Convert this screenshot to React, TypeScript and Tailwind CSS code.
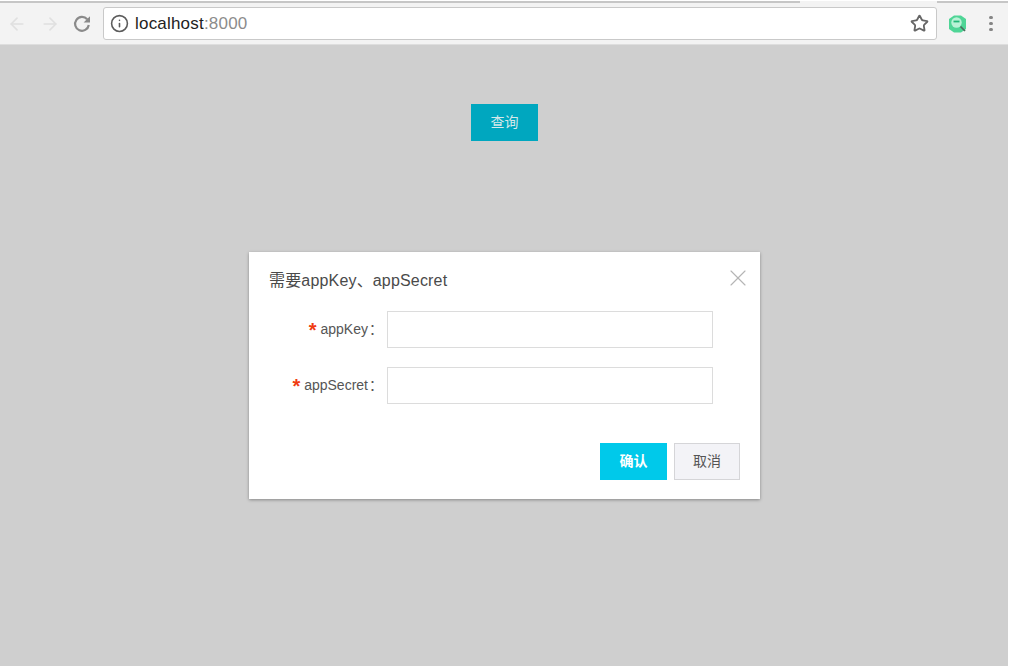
import React from 'react';
import { ArrowLeft, ArrowRight, Info, Star, X } from 'lucide-react';

const fontStack = 'font-["Liberation_Sans","Noto_Sans_CJK_SC",sans-serif]';

const ReloadIcon = () => (
  <svg width="18" height="18" viewBox="0 0 18 18" fill="none" className="ml-[13px]">
    <path d="M14.2 4.3 A6.9 6.9 0 1 0 15.8 10" stroke="#8a8a8a" strokeWidth="2.2" />
    <path d="M17 1.2 V7.6 H10.6 Z" fill="#8a8a8a" />
  </svg>
);

const ExtensionIcon = () => (
  <svg width="19" height="18" viewBox="0 0 19 18" className="ml-[11px]">
    <path d="M6 0.5 H13 L18 4 V14 L13 17.5 H6 L1 14 V4 Z" fill="#4fd596" />
    <circle cx="8.5" cy="7.5" r="5.2" fill="#b9f2d6" />
    <path d="M5.5 6.5 h6" stroke="#22b777" strokeWidth="1.8" />
    <path d="M12.5 11.5 L17 16" stroke="#4d6b5e" strokeWidth="1.7" />
  </svg>
);

const Toolbar = () => (
  <div className="flex h-[45px] shrink-0 flex-col border-b border-[#dedede] bg-[#f3f3f3]">
    <div className="flex h-[3px] justify-between border-t border-white">
      <div className="w-[800px] bg-[#c6c6c6]"></div>
      <div className="w-[71px] bg-[#c6c6c6]"></div>
    </div>
    <div className="flex flex-1 items-center pl-[7px]">
      <ArrowLeft size={20} strokeWidth={2} className="text-[#e0e0e0]" />
      <ArrowRight size={20} strokeWidth={2} className="ml-[13px] text-[#e0e0e0]" />
      <ReloadIcon />
      <div className="ml-[12px] flex h-[33px] w-[834px] items-center rounded-[3px] border border-[#c9c9c9] bg-white pl-[6px] pr-[7px]">
        <Info size={19} strokeWidth={2} className="text-[#5c5c5c]" />
        <span className="ml-[6px] text-[17px] tracking-[0.2px] text-[#222]">
          localhost<span className="text-[#8c8c8c]">:8000</span>
        </span>
        <Star size={19} strokeWidth={2.3} className="ml-auto text-[#666]" />
      </div>
      <ExtensionIcon />
      <div className="ml-[22px] flex flex-col gap-[2.5px]">
        <span className="h-[3.5px] w-[3.5px] rounded-full bg-[#858585]"></span>
        <span className="h-[3.5px] w-[3.5px] rounded-full bg-[#858585]"></span>
        <span className="h-[3.5px] w-[3.5px] rounded-full bg-[#858585]"></span>
      </div>
    </div>
  </div>
);

const Field = ({ label }: { label: string }) => (
  <div className="flex items-center">
    <label className="flex w-[126px] items-center justify-end pr-[4px] text-[14px] text-[#555]">
      <span className="mr-[4px] mt-[1px] text-[20px] font-bold leading-none text-[#f03c12]">*</span>
      {label}
      <span className="ml-[1px]">：</span>
    </label>
    <input className="h-[37px] w-[326px] border border-[#dcdcdc] bg-white" />
  </div>
);

const Dialog = () => (
  <div className="absolute left-[249px] top-[207px] flex h-[247px] w-[511px] flex-col bg-white pl-[12px] pr-[20px] shadow-[0_1px_3px_rgba(0,0,0,0.35)]">
    <X size={28} strokeWidth={1} className="absolute right-[8px] top-[12px] text-[#b5b5b5]" />
    <h2 className="ml-[8px] mt-[19px] text-[16px] leading-[20px] tracking-[0.17px] text-[#4a4a4a]">需要appKey、appSecret</h2>
    <div className="mt-[20px] flex flex-col gap-[19px]">
      <Field label="appKey" />
      <Field label="appSecret" />
    </div>
    <div className="mt-auto mb-[19px] flex justify-end gap-[7px]">
      <button className="h-[37px] w-[67px] bg-[#00c9ea] text-[14px] font-bold text-white">确认</button>
      <button className="h-[37px] w-[66px] border border-[#d5d5d8] bg-[#f3f3f7] text-[14px] text-[#555]">取消</button>
    </div>
  </div>
);

const App = () => (
  <div className={`flex h-[666px] w-[1008px] flex-col ${fontStack}`}>
    <Toolbar />
    <main className="relative flex flex-1 flex-col items-center bg-[#cfcfcf] pt-[59px]">
      <button className="ml-[1px] h-[37px] w-[67px] bg-[#00a7bf] text-[14px] text-[#d6e8ea]">查询</button>
      <Dialog />
    </main>
  </div>
);

export default App;
